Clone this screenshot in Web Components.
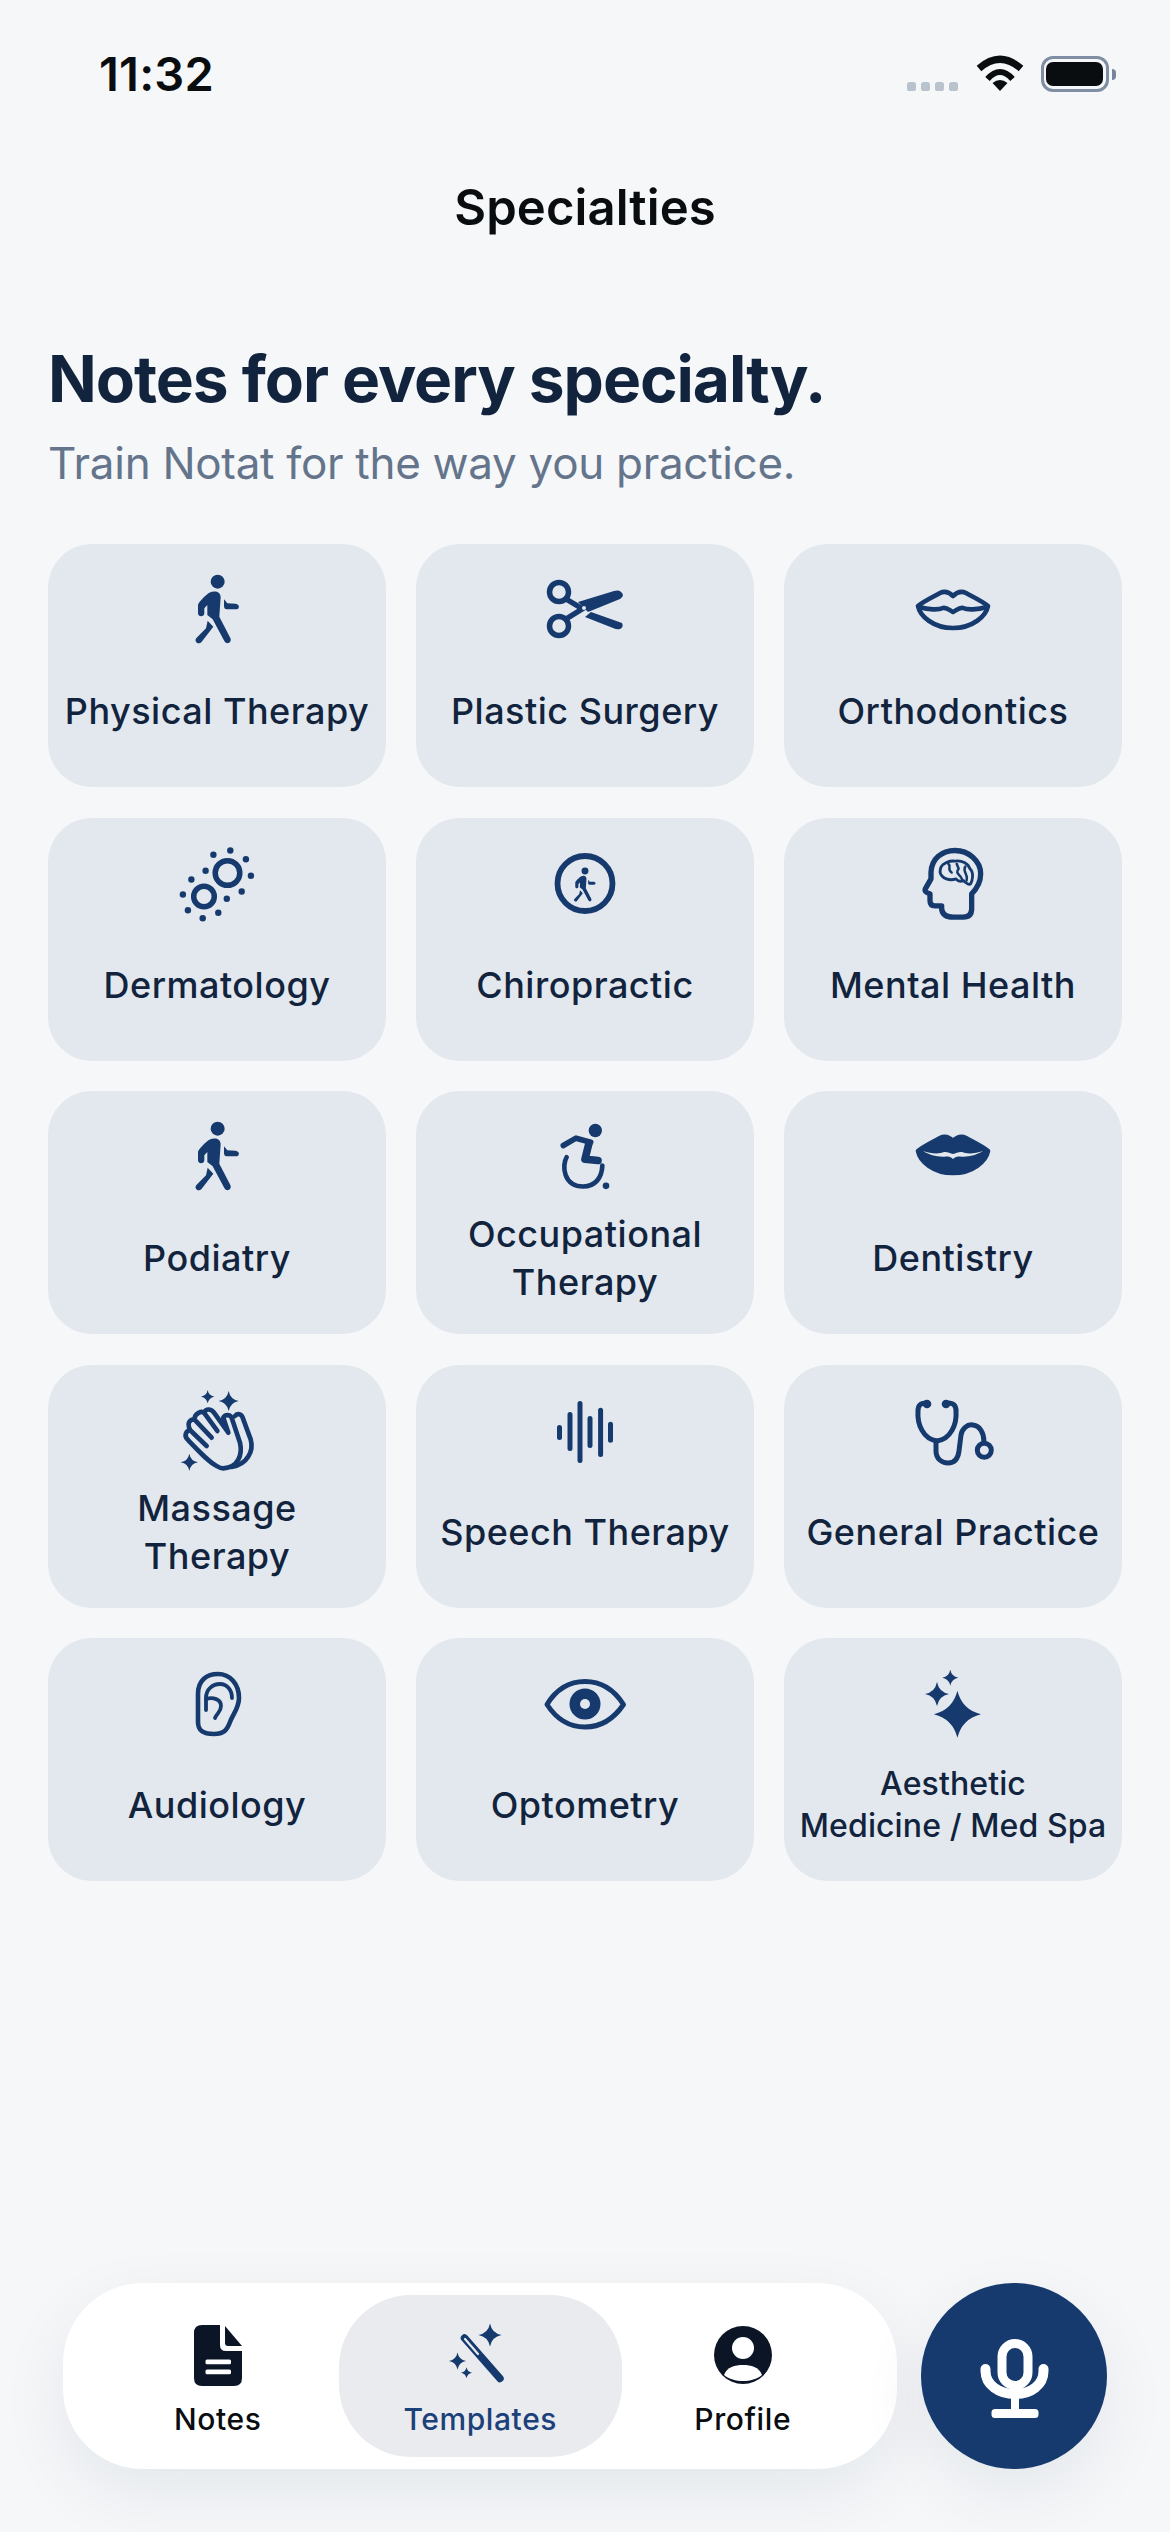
<!DOCTYPE html>
<html lang="en"><head><meta charset="utf-8"><title>Specialties</title>
<style>
html,body{margin:0;padding:0;background:#F5F7F9}
body{font-family:Inter,"Noto Sans",sans-serif;width:1170px;height:2532px;overflow:hidden}
app-screen{height:2532px}
</style></head>
<body>
<app-screen>
  <status-bar time="11:32"></status-bar>
  <nav-title>Specialties</nav-title>
  <hero-head>
    <span slot="title">Notes for every specialty.</span>
    <span slot="sub">Train Notat for the way you practice.</span>
  </hero-head>
  <specialty-grid>
    <specialty-card icon="walk">Physical Therapy</specialty-card>
    <specialty-card icon="scissors">Plastic Surgery</specialty-card>
    <specialty-card icon="lips">Orthodontics</specialty-card>
    <specialty-card icon="derm">Dermatology</specialty-card>
    <specialty-card icon="chiro">Chiropractic</specialty-card>
    <specialty-card icon="head">Mental Health</specialty-card>
    <specialty-card icon="walk">Podiatry</specialty-card>
    <specialty-card icon="wheel">Occupational<br>Therapy</specialty-card>
    <specialty-card icon="lipsfill">Dentistry</specialty-card>
    <specialty-card icon="hands">Massage<br>Therapy</specialty-card>
    <specialty-card icon="wave">Speech Therapy</specialty-card>
    <specialty-card icon="steth">General Practice</specialty-card>
    <specialty-card icon="ear">Audiology</specialty-card>
    <specialty-card icon="eye">Optometry</specialty-card>
    <specialty-card icon="sparkle" small>Aesthetic<br>Medicine / Med Spa</specialty-card>
  </specialty-grid>
  <bottom-bar>
    <tab-item icon="note">Notes</tab-item>
    <tab-item icon="wand" active>Templates</tab-item>
    <tab-item icon="person">Profile</tab-item>
  </bottom-bar>
</app-screen>
<script>
const star=(x,y,r,k=.16)=>{const i=r*k;return `M${x} ${y-r}Q${x+i} ${y-i} ${x+r} ${y}Q${x+i} ${y+i} ${x} ${y+r}Q${x-i} ${y+i} ${x-r} ${y}Q${x-i} ${y-i} ${x} ${y-r}Z`};
const walker=`<circle cx="143" cy="65" r="21"/>
<path d="M118 98C135 90 152 95 152 112L148 170L181 234C187 248 170 256 163 243L128 178L112 165V135L103 145V160C103 172 84 172 84 160V135C84 128 110 102 118 98Z"/>
<path d="M162 118L172 130L197 131C210 133 210 148 197 148H170C165 148 162 144 162 138Z"/>
<path d="M113 182L130 200L94 247C85 256 70 243 80 233L108 205Z"/>`;
const lipOuter="M60 28C56 24 51 23 47 25C40 29 31 33 25 38C27 48 40 60 60 60C80 60 93 48 95 38C89 33 80 29 73 25C69 23 64 24 60 28Z";
const C="#163A6E";
const ICONS={
walk:`<g fill="${C}" transform="translate(13,-8) scale(.3333)">${walker}</g>`,
scissors:`<g fill="none" stroke="${C}" stroke-width="5.5"><circle cx="34" cy="24" r="9.5"/><circle cx="34" cy="58" r="9.5"/><path d="M41 31L56 40M41 51L62 38"/></g>
<g fill="${C}"><path d="M53 34L89 23Q96 21 98 27Q98 29 95 31L63 44Z"/><path d="M60 49L66 44L97 55Q99 59 95 61Q92 62 88 60Z"/></g><circle cx="59" cy="40" r="2" fill="#E2E8EE"/>`,
lips:`<g fill="none" stroke="${C}" stroke-width="4.6" stroke-linejoin="round" stroke-linecap="round"><path d="${lipOuter}"/><path d="M26 39C36 42 46 42 50 40C54 39 57 43 60 44C63 43 66 39 70 40C74 42 84 42 94 39"/></g>`,
lipsfill:`<g transform="translate(0,-2)"><path fill="${C}" stroke="${C}" stroke-width="4.6" stroke-linejoin="round" d="${lipOuter}"/><path fill="#E2E8EE" d="M30 38C38 41 47 41 51 39C54 38.500 57 40 60 41C63 40 66 38.500 69 39C73 41 82 41 90 38C84 42 74 44.500 67 43.500C64 43.500 62 44 60 46C58 44 56 43.500 53 43.500C46 44.500 36 42 30 38Z"/></g>`,
derm:`<g fill="none" stroke="${C}" stroke-width="5.5"><circle cx="70.500" cy="31" r="12.300"/><circle cx="47" cy="54.500" r="10.300"/></g><g fill="${C}">${[[73.3,8.5],[88.9,17.2],[93.9,33.8],[84.7,49.5],[69.8,56.8],[61.3,70.8],[45.7,76.2],[30.9,68.2],[25.9,52.5],[34.4,37.5],[48.6,28.8],[56.4,12.8]].map(p=>`<circle cx="${p[0]}" cy="${p[1]}" r="3.200"/>`).join("")}</g>`,
chiro:`<circle cx="60" cy="41.500" r="27.500" fill="none" stroke="${C}" stroke-width="5.800"/><g fill="${C}" transform="translate(60,43) scale(.165) translate(-143,-150)">${walker}</g>`,
head:`<g transform="translate(7,-11.500) scale(.3333)" fill="none" stroke="${C}" stroke-linejoin="round" stroke-linecap="round"><path stroke-width="16" d="M125 228V236Q128 260 160 260H190Q215 260 215 235V190C235 170 242 150 242 130C242 90 205 60 165 60C125 60 95 85 93 125V145L76 175Q72 185 90 190V210Q90 226 105 226H125"/><path stroke-width="8.500" d="M122 112C130 96 150 90 165 92C185 88 205 100 210 115C222 125 218 150 212 160C205 165 195 155 190 150C180 155 172 150 168 145C150 152 125 145 120 125Z"/><path stroke-width="7.500" d="M145 100C155 108 140 116 155 126M170 100L176 115C164 130 180 130 186 146M196 108C186 125 206 130 200 150"/></g>`,
wheel:`<g transform="translate(-5,-14.500) scale(.3333)" fill="none" stroke="${C}" stroke-linecap="round" stroke-linejoin="round"><circle cx="226" cy="90" r="20" fill="${C}" stroke="none"/><circle cx="258" cy="256" r="10" fill="${C}" stroke="none"/><path stroke-width="17" d="M130 135L168 113L212 125"/><path stroke-width="23" d="M207 128L195 176L234 180"/><path stroke-width="14" d="M140 170C125 195 130 258 190 258C225 258 246 232 247 195"/></g>`,
hands:`<g transform="translate(3,-8) scale(.3333)"><g fill="${C}"><path d="${star(143,47,20)}"/><path d="${star(206,60,30)}"/><path d="${star(88,244,26)}"/></g><g fill="none" stroke="${C}" stroke-width="14" stroke-linecap="round" stroke-linejoin="round"><path d="M170 255C150 245 130 225 85 178C70 165 78 150 90 147C80 125 90 115 103 115C105 95 125 90 132 95C140 80 155 85 162 95L205 155L190 110C195 100 210 100 215 110L240 185C248 220 235 260 190 262C180 262 175 258 170 255Z"/><path d="M90 147L140 195M103 115L155 170M132 95L172 150"/><path d="M225 105C232 95 245 100 248 110L272 175C282 210 262 250 215 258"/></g></g>`,
wave:`<g stroke="${C}" stroke-width="5" stroke-linecap="round"><path d="M34.500 38.500V48.500M45 25.500V59.500M55 14.500V71.500M65 29.500V56.500M75.600 21.200V65.500M85.500 35.200V51.200"/></g>`,
steth:`<g fill="none" stroke="${C}" stroke-width="5" stroke-linecap="round"><path d="M33 14C28 14 25 16 25 22C24 35 30 50 44 52C58 50 64 35 63 22C63 16 60 14 55 14"/><path d="M43 52V62C43 70 49 74 55 74C61 74 65 70 66 62L68 46C69 40 74 35 80 36C87 37 91 44 91 53"/><circle cx="91.300" cy="61.300" r="7"/></g><g fill="${C}"><circle cx="34" cy="15" r="4.300"/><circle cx="53" cy="15" r="4.300"/></g>`,
ear:`<g fill="none" stroke="${C}" stroke-linecap="round" stroke-linejoin="round"><path stroke-width="4.600" d="M41 32C41 18 50 12 61 12C73 12 82 22 82 36C82 46 76 52 73 60C70 68 67 72 57 72C48 72 41 70 41 60Z"/><path stroke-width="3.800" d="M49 48V36C49 27 56 22 63 22C70 22 75 28 75 36"/><path stroke-width="3.800" d="M49 37C56 35 64 37 64 44C64 50 60 51 58 56"/></g>`,
eye:`<path fill="none" stroke="${C}" stroke-width="5" stroke-linejoin="round" d="M22 42.500C32 26 46 19.500 60 19.500C74 19.500 88 26 98.500 42.500C88 58 74 65 60 65C46 65 32 58 22 42.500Z"/><circle cx="60" cy="42" r="15.500" fill="${C}"/><circle cx="60" cy="42" r="5" fill="#E2E8EE"/>`,
sparkle:`<g fill="${C}"><path d="${star(64.4,52.3,23.5,.2)}"/><path d="${star(44,32,12)}"/><path d="${star(57.3,15.7,8)}"/></g>`,
note:`<g transform="translate(36,6)" fill="#0B1526"><path d="M8 0H26V20Q26 26 32 26H48V53Q48 61 40 61H8Q0 61 0 53V8Q0 0 8 0Z"/><path d="M31 1L48 21H34Q31 21 31 18Z"/><rect x="11.500" y="34.500" width="25.500" height="4.800" rx="1.500" fill="#fff"/><rect x="11.500" y="44.500" width="25.500" height="4.800" rx="1.500" fill="#fff"/></g>`,
wand:`<path d="M44.500 19L80 59.500" stroke="${C}" stroke-width="7.500" stroke-linecap="round"/><path d="M45 20L58 35" stroke="#E9EBEE" stroke-width="2.200" stroke-linecap="round"/><g fill="${C}"><path d="${star(70,16,11.500)}"/><path d="${star(37.500,42,8.500)}"/><path d="${star(46.500,53.700,5.500)}"/></g>`,
person:`<circle cx="60" cy="36" r="29" fill="#0B1526"/><circle cx="60" cy="29" r="11" fill="#fff"/><path fill="#fff" d="M41 56C44 48 52 46 60 46C68 46 76 48 79 56C74 60 67 62 60 62C53 62 46 60 41 56Z"/>`
};
const def=(n,c)=>customElements.define(n,c);
const shadow=(el,html)=>{el.attachShadow({mode:"open"}).innerHTML=html};

def("app-screen",class extends HTMLElement{constructor(){super();shadow(this,`<style>:host{display:flex;flex-direction:column;width:1170px;box-sizing:border-box}</style><slot></slot>`)}});

def("app-icon",class extends HTMLElement{connectedCallback(){
  const h=this.getAttribute("h")||84;
  shadow(this,`<style>:host{display:block;width:120px;height:${h}px;flex:none}svg{display:block;overflow:visible}</style><svg width="120" height="${h}" viewBox="0 0 120 ${h}" aria-hidden="true">${ICONS[this.getAttribute("name")]}</svg>`)
}});

def("status-bar",class extends HTMLElement{connectedCallback(){
  shadow(this,`<style>
  :host{display:flex;height:148px;box-sizing:border-box;padding:52px 54px 0 99px;justify-content:space-between;align-items:flex-start;color:#0A0D10}
  .t{font:600 47px/44px Inter,sans-serif;letter-spacing:.2px}
  .r{display:flex;align-items:flex-start;margin-top:3px}
  .dots{display:flex;gap:5.300px;margin:27px 18px 0 0}
  .dots i{width:8.700px;height:8.700px;border-radius:2.600px;background:#B9C3CE}
  .bat{display:flex;align-items:center;margin:1px 0 0 17px}
  .box{width:68.500px;height:36px;box-sizing:border-box;border:3.300px solid #7F8EA3;border-radius:12px;padding:2.700px}
  .fill{height:100%;background:#0A0D10;border-radius:7px}
  .nub{width:4px;height:11px;background:#76869B;border-radius:0 5px 5px 0;margin-left:3px}
  svg{display:block}
  </style>
  <div class="t">${this.getAttribute("time")}</div>
  <div class="r"><div class="dots"><i></i><i></i><i></i><i></i></div>
  <svg width="48" height="36" viewBox="0 0 48 36" aria-hidden="true"><path fill="none" stroke="#0A0D10" stroke-width="7" d="M3 13.500Q24 -5 45 13.500"/><path fill="none" stroke="#0A0D10" stroke-width="6" d="M11.500 24Q24 10 36.500 24"/><path fill="#0A0D10" d="M16.500 28Q24 22 31.500 28L24 36Z"/></svg>
  <div class="bat"><div class="box"><div class="fill"></div></div><div class="nub"></div></div></div>`)
}});

def("nav-title",class extends HTMLElement{constructor(){super();shadow(this,`<style>:host{display:flex;height:120px;align-items:center;justify-content:center;font:600 49px/60px Inter,sans-serif;color:#0A0D10;letter-spacing:.1px}</style><slot></slot>`)}});

def("hero-head",class extends HTMLElement{constructor(){super();shadow(this,`<style>
  :host{display:block;padding:68.500px 48px 0;height:276px;box-sizing:border-box}
  .a{font:700 64px/84px Inter,sans-serif;color:#12233D;letter-spacing:-1.05px}
  .b{font:400 44px/56px Inter,sans-serif;color:#64748B;margin-top:14.500px;letter-spacing:-.3px}
  </style><div class="a"><slot name="title"></slot></div><div class="b"><slot name="sub"></slot></div>`)}});

def("specialty-grid",class extends HTMLElement{constructor(){super();shadow(this,`<style>:host{display:grid;grid-template-columns:repeat(3,338px);grid-auto-rows:243px;column-gap:30px;row-gap:30.500px;padding:0 48px}</style><slot></slot>`)}});

def("specialty-card",class extends HTMLElement{connectedCallback(){
  const small=this.hasAttribute("small");
  shadow(this,`<style>
  :host{display:flex;flex-direction:column;align-items:center;background:#E2E8EE;border-radius:44px;padding-top:24px;box-sizing:border-box;color:#12233D}
  .l{height:96px;margin-top:11px;align-self:stretch;display:flex;align-items:center;justify-content:center;text-align:center;font:500 ${small?32:36}px/${small?42:48}px Inter,sans-serif;letter-spacing:${small?.1:.5}px;white-space:nowrap}
  </style><app-icon name="${this.getAttribute("icon")}"></app-icon><div class="l"><span><slot></slot></span></div>`)
}});

def("tab-item",class extends HTMLElement{connectedCallback(){
  const a=this.hasAttribute("active");
  shadow(this,`<style>
  :host{display:flex;flex-direction:column;align-items:center;box-sizing:border-box;height:162px;padding-top:24px;border-radius:72px;color:${a?"#1C4079":"#0A0D10"};${a?"background:#E9EBEE;margin:0 -10px;":""}}
  .l{font:500 30px/40px Inter,sans-serif;margin-top:8px;letter-spacing:.6px}
  </style><app-icon h="72" name="${this.getAttribute("icon")}"></app-icon><div class="l"><slot></slot></div>`)
}});

def("bottom-bar",class extends HTMLElement{constructor(){super();shadow(this,`<style>
  :host{display:flex;gap:24px;margin-top:auto;padding:0 63px 63px 63px}
  .pill{width:834px;height:186px;box-sizing:border-box;background:#fff;border-radius:80px;padding:12px 23.500px;display:grid;grid-template-columns:repeat(3,262.500px);box-shadow:0 24px 70px rgba(15,30,60,.07)}
  .mic{width:186px;height:186px;border-radius:50%;background:#163A6D;display:flex;align-items:center;justify-content:center;box-shadow:0 24px 70px rgba(15,30,60,.07)}
  svg{display:block;transform:translate(1px,2px)}
  </style><div class="pill"><slot></slot></div><div class="mic"><svg width="80" height="90" viewBox="0 0 80 90" aria-hidden="true"><rect x="27" y="10.500" width="26" height="42" rx="13" fill="none" stroke="#fff" stroke-width="9"/><path d="M10.500 36V38C10.500 52 24 61 40 61C56 61 68.500 52 68.500 38V36" fill="none" stroke="#fff" stroke-width="10" stroke-linecap="round"/><path d="M40 61V78" stroke="#fff" stroke-width="8"/><rect x="16.500" y="76" width="47" height="9" rx="3.500" fill="#fff"/></svg></div>`)}});
</script>
</body></html>
